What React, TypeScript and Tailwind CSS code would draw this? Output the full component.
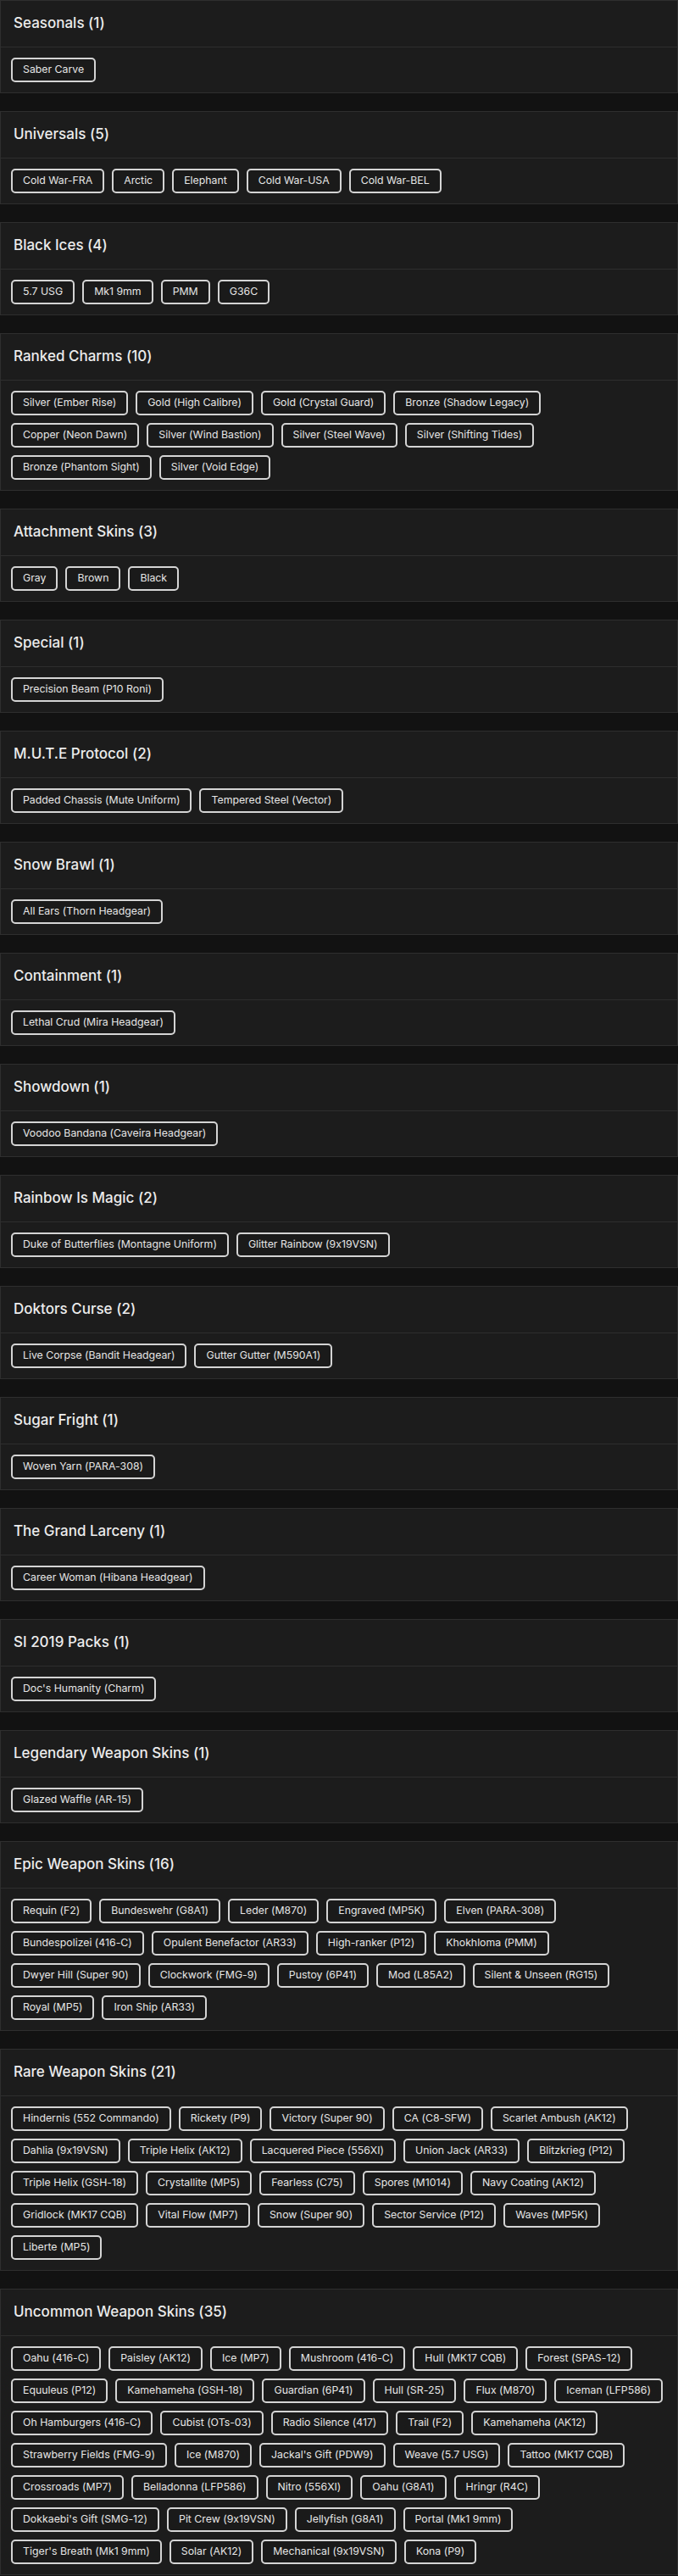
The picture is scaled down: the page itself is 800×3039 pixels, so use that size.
import React from "react";

type Section = { title: string; items: string[] };

const sections: Section[] = [
  { title: "Seasonals", items: ["Saber Carve"] },
  { title: "Universals", items: ["Cold War-FRA", "Arctic", "Elephant", "Cold War-USA", "Cold War-BEL"] },
  { title: "Black Ices", items: ["5.7 USG", "Mk1 9mm", "PMM", "G36C"] },
  {
    title: "Ranked Charms",
    items: [
      "Silver (Ember Rise)",
      "Gold (High Calibre)",
      "Gold (Crystal Guard)",
      "Bronze (Shadow Legacy)",
      "Copper (Neon Dawn)",
      "Silver (Wind Bastion)",
      "Silver (Steel Wave)",
      "Silver (Shifting Tides)",
      "Bronze (Phantom Sight)",
      "Silver (Void Edge)",
    ],
  },
  { title: "Attachment Skins", items: ["Gray", "Brown", "Black"] },
  { title: "Special", items: ["Precision Beam (P10 Roni)"] },
  { title: "M.U.T.E Protocol", items: ["Padded Chassis (Mute Uniform)", "Tempered Steel (Vector)"] },
  { title: "Snow Brawl", items: ["All Ears (Thorn Headgear)"] },
  { title: "Containment", items: ["Lethal Crud (Mira Headgear)"] },
  { title: "Showdown", items: ["Voodoo Bandana (Caveira Headgear)"] },
  { title: "Rainbow Is Magic", items: ["Duke of Butterflies (Montagne Uniform)", "Glitter Rainbow (9x19VSN)"] },
  { title: "Doktors Curse", items: ["Live Corpse (Bandit Headgear)", "Gutter Gutter (M590A1)"] },
  { title: "Sugar Fright", items: ["Woven Yarn (PARA-308)"] },
  { title: "The Grand Larceny", items: ["Career Woman (Hibana Headgear)"] },
  { title: "SI 2019 Packs", items: ["Doc's Humanity (Charm)"] },
  { title: "Legendary Weapon Skins", items: ["Glazed Waffle (AR-15)"] },
  {
    title: "Epic Weapon Skins",
    items: [
      "Requin (F2)",
      "Bundeswehr (G8A1)",
      "Leder (M870)",
      "Engraved (MP5K)",
      "Elven (PARA-308)",
      "Bundespolizei (416-C)",
      "Opulent Benefactor (AR33)",
      "High-ranker (P12)",
      "Khokhloma (PMM)",
      "Dwyer Hill (Super 90)",
      "Clockwork (FMG-9)",
      "Pustoy (6P41)",
      "Mod (L85A2)",
      "Silent & Unseen (RG15)",
      "Royal (MP5)",
      "Iron Ship (AR33)",
    ],
  },
  {
    title: "Rare Weapon Skins",
    items: [
      "Hindernis (552 Commando)",
      "Rickety (P9)",
      "Victory (Super 90)",
      "CA (C8-SFW)",
      "Scarlet Ambush (AK12)",
      "Dahlia (9x19VSN)",
      "Triple Helix (AK12)",
      "Lacquered Piece (556XI)",
      "Union Jack (AR33)",
      "Blitzkrieg (P12)",
      "Triple Helix (GSH-18)",
      "Crystallite (MP5)",
      "Fearless (C75)",
      "Spores (M1014)",
      "Navy Coating (AK12)",
      "Gridlock (MK17 CQB)",
      "Vital Flow (MP7)",
      "Snow (Super 90)",
      "Sector Service (P12)",
      "Waves (MP5K)",
      "Liberte (MP5)",
    ],
  },
  {
    title: "Uncommon Weapon Skins",
    items: [
      "Oahu (416-C)",
      "Paisley (AK12)",
      "Ice (MP7)",
      "Mushroom (416-C)",
      "Hull (MK17 CQB)",
      "Forest (SPAS-12)",
      "Equuleus (P12)",
      "Kamehameha (GSH-18)",
      "Guardian (6P41)",
      "Hull (SR-25)",
      "Flux (M870)",
      "Iceman (LFP586)",
      "Oh Hamburgers (416-C)",
      "Cubist (OTs-03)",
      "Radio Silence (417)",
      "Trail (F2)",
      "Kamehameha (AK12)",
      "Strawberry Fields (FMG-9)",
      "Ice (M870)",
      "Jackal's Gift (PDW9)",
      "Weave (5.7 USG)",
      "Tattoo (MK17 CQB)",
      "Crossroads (MP7)",
      "Belladonna (LFP586)",
      "Nitro (556XI)",
      "Oahu (G8A1)",
      "Hringr (R4C)",
      "Dokkaebi's Gift (SMG-12)",
      "Pit Crew (9x19VSN)",
      "Jellyfish (G8A1)",
      "Portal (Mk1 9mm)",
      "Tiger's Breath (Mk1 9mm)",
      "Solar (AK12)",
      "Mechanical (9x19VSN)",
      "Kona (P9)",
    ],
  },
];

function Chip({ label }: { label: string }) {
  return (
    <span className="flex h-[29px] items-center rounded-[5px] border-2 border-[#d4d4d4] bg-[#1a1a1a] px-[12px] text-[12.3px] leading-none text-[#e6e6e6]">
      {label}
    </span>
  );
}

function SectionCard({ section }: { section: Section }) {
  return (
    <div className="border border-[#2e2e2e] bg-[#1c1c1c]">
      <div className="flex h-[55px] items-center border-b border-[#2e2e2e] px-[15px]">
        <h2 className="text-[17px] font-medium text-[#ececec]">
          {section.title} ({section.items.length})
        </h2>
      </div>
      <div className="flex flex-wrap gap-[9px] px-[12px] py-[12px]">
        {section.items.map((item, i) => (
          <Chip key={i} label={item} />
        ))}
      </div>
    </div>
  );
}

export default function App() {
  return (
    <div
      className="min-h-screen bg-[#121212] [font-feature-settings:'calt'_0]"
      style={{ fontFamily: "Inter, 'Noto Sans', sans-serif" }}
    >
      <div className="flex flex-col gap-[21px]">
        {sections.map((s) => (
          <SectionCard key={s.title} section={s} />
        ))}
      </div>
    </div>
  );
}
